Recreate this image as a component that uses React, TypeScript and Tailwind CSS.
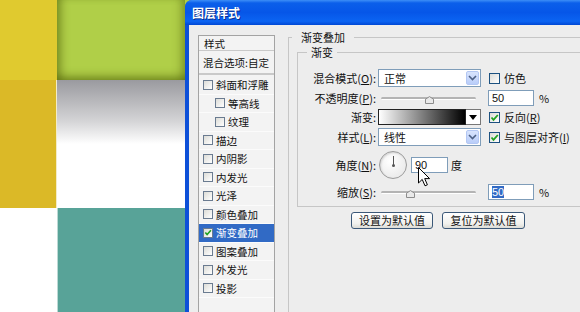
import React from "react";

const items = [
  { label: "斜面和浮雕" },
  { label: "等高线", indent: true },
  { label: "纹理", indent: true },
  { label: "描边" },
  { label: "内阴影" },
  { label: "内发光" },
  { label: "光泽" },
  { label: "颜色叠加" },
  { label: "渐变叠加", active: true },
  { label: "图案叠加" },
  { label: "外发光" },
  { label: "投影" },
];

function Box({ checked, small }: { checked?: boolean; small?: boolean }) {
  return (
    <span
      className={
        small
          ? "w-[10px] h-[10px] shrink-0 border border-[#6a7b90] bg-[linear-gradient(135deg,#dcdcd7,#ffffff)] flex items-center justify-center"
          : "w-[11px] h-[11px] shrink-0 border border-[#1c5180] bg-[linear-gradient(135deg,#dcdcd7,#ffffff)] flex items-center justify-center"
      }
    >
      {checked && (
        <svg width="9" height="9" viewBox="0 0 9 9">
          <path d="M1.5 4.5 L3.5 6.8 L7.8 2" fill="none" stroke="#21a121" strokeWidth="1.8" />
        </svg>
      )}
    </span>
  );
}

function Select({ value }: { value: string }) {
  return (
    <div className="ml-[2px] w-[103px] h-[18px] border border-[#7f9db9] bg-white flex items-center">
      <span className="pl-[5px] flex-1">{value}</span>
      <span className="w-[13px] h-[14px] mr-[1px] rounded-[2px] bg-[linear-gradient(#d8e4fd,#b9cdf9)] border border-[#b3c7f3] flex items-center justify-center">
        <svg width="9" height="6" viewBox="0 0 9 6">
          <path d="M1 1 L4.5 4.5 L8 1" fill="none" stroke="#4d6185" strokeWidth="1.6" />
        </svg>
      </span>
    </div>
  );
}

function Slider({ thumb }: { thumb: number }) {
  return (
    <div className="ml-[2px] w-[103px] h-[16px] relative flex items-center pl-[3px] pr-[5px]">
      <div className="w-full h-[3px] rounded-full bg-[#b4b4b4] border-b border-white" />
      <svg className="absolute top-[6px]" style={{ left: thumb }} width="9" height="8" viewBox="0 0 9 8">
        <path d="M0.5 7.5 V3.2 L4.5 0.6 L8.5 3.2 V7.5 Z" fill="#e9e9e9" stroke="#8c8c8c" />
      </svg>
    </div>
  );
}

function Label({ children }: { children: React.ReactNode }) {
  return <div className="w-[78px] text-right whitespace-nowrap">{children}</div>;
}

function NumBox({ children }: { children: React.ReactNode }) {
  return (
    <div className="w-[46px] h-[16px] border border-[#7f9db9] bg-white flex items-center pl-[3px] font-['Liberation_Sans',sans-serif]">
      {children}
    </div>
  );
}

export default function App() {
  return (
    <div className="w-[580px] h-[312px] overflow-hidden flex relative bg-[#b0cf48] text-[11px] leading-[13px] text-[#111] font-['Noto_Sans_CJK_SC',sans-serif]">
      {/* canvas behind the dialog */}
      <div className="grid grid-cols-[57px_128px] grid-rows-[80px_128px_104px] shrink-0">
        <div className="bg-[#e0ca2f]" />
        <div className="bg-[#b0cf48] shadow-[inset_9px_0_8px_-5px_rgba(80,95,10,0.55),inset_-9px_0_8px_-5px_rgba(80,95,10,0.45),inset_0_-9px_8px_-5px_rgba(80,95,10,0.55)]" />
        <div className="bg-[#dbb927] border-r border-[#f3ecc8]" />
        <div className="bg-[linear-gradient(#9a9a9f,#d4d4d6_32%,#ffffff_50%)]" />
        <div className="bg-white" />
        <div className="bg-[#58a398] border-l border-[#bcd9d4]" />
      </div>

      {/* dialog */}
      <div className="flex-1 min-w-0 flex flex-col rounded-tl-[7px] overflow-hidden bg-[#0d50d8]">
        <div className="h-[25px] shrink-0 flex items-center pl-[7px] bg-[linear-gradient(180deg,#3d8ef7_0%,#0b5fea_12%,#0656e8_50%,#0b64f2_85%,#0048d4_100%)]">
          <span className="text-white font-bold text-[12px] [text-shadow:1px_1px_0_#0a2f8f]">图层样式</span>
        </div>

        <div className="flex-1 flex ml-[4px] bg-[#ededed]">
          {/* style list */}
          <div className="ml-[9px] mt-[10px] w-[77px] shrink-0 border border-[#a3a3a3] bg-[#f3f3f3] flex flex-col text-[10.5px]">
            <div className="h-[15px] pl-[5px] flex items-center border-b border-[#c9c9c9]">样式</div>
            <div className="h-[24px] pl-[4px] flex items-center border-b-2 border-[#c9c9c9] whitespace-nowrap">混合选项:自定</div>
            <div className="mt-[1px] flex flex-col">
              {items.map((it) => (
                <div
                  key={it.label}
                  className={
                    "h-[18.5px] flex items-center gap-[3px] border-b border-[#fbfbfb] whitespace-nowrap " +
                    (it.indent ? "pl-[16px] " : "pl-[4px] ") +
                    (it.active ? "bg-[#316ac5] text-white" : "")
                  }
                >
                  <Box checked={it.active} small />
                  <span>{it.label}</span>
                </div>
              ))}
            </div>
          </div>

          {/* right side */}
          <fieldset className="ml-[13px] mt-[6px] w-[330px] h-[320px] shrink-0 border border-[#c6c6c6] pl-[8px]">
            <legend className="ml-[-5px] px-[9px]">渐变叠加</legend>
            <fieldset className="mt-[2px] w-[300px] border border-[#c6c6c6] pt-[10px] pb-[6px]">
              <legend className="ml-[9px] px-[4px]">渐变</legend>

              <div className="h-[18px] flex items-center">
                <Label>混合模式(<u>O</u>):</Label>
                <Select value="正常" />
                <span className="ml-[8px] flex items-center gap-[4px]">
                  <Box />
                  <span>仿色</span>
                </span>
              </div>

              <div className="mt-[3px] h-[16px] flex items-center">
                <Label>不透明度(<u>P</u>):</Label>
                <Slider thumb={47} />
                <span className="ml-[7px]"><NumBox>50</NumBox></span>
                <span className="ml-[5px]">%</span>
              </div>

              <div className="mt-[2px] h-[18px] flex items-center">
                <Label>渐变:</Label>
                <div className="ml-[2px] w-[103px] h-[16px] flex">
                  <div className="flex-1 border border-[#222] bg-[linear-gradient(90deg,#ffffff,#000000)]" />
                  <div className="w-[15px] border border-l-0 border-[#777] bg-white flex items-center justify-center">
                    <svg width="8" height="5" viewBox="0 0 8 5">
                      <path d="M0 0 H8 L4 5 Z" fill="#000" />
                    </svg>
                  </div>
                </div>
                <span className="ml-[8px] flex items-center gap-[4px]">
                  <Box checked />
                  <span>反向(<u>R</u>)</span>
                </span>
              </div>

              <div className="mt-[2px] h-[18px] flex items-center">
                <Label>样式(<u>L</u>):</Label>
                <Select value="线性" />
                <span className="ml-[8px] flex items-center gap-[4px] whitespace-nowrap">
                  <Box checked />
                  <span>与图层对齐(<u>I</u>)</span>
                </span>
              </div>

              <div className="mt-[5px] h-[28px] flex items-center">
                <Label>角度(<u>N</u>):</Label>
                <div className="ml-[3px] w-[28px] h-[28px] rounded-full border border-[#9b9b9b] bg-[radial-gradient(circle_at_40%_35%,#ffffff,#e4e4e4)] shadow-[inset_1px_1px_2px_rgba(0,0,0,0.15)] flex flex-col items-center pt-[4px]">
                  <div className="w-[1px] h-[9px] bg-[#555]" />
                  <div className="w-[3px] h-[3px] rounded-full bg-[#555] -mt-[1px]" />
                </div>
                <span className="ml-[4px]">
                  <div className="w-[37px] h-[16px] border border-[#7f9db9] bg-white flex items-center pl-[3px] font-['Liberation_Sans',sans-serif]">90</div>
                </span>
                <span className="ml-[3px]">度</span>
              </div>

              <div className="mt-[5px] h-[16px] flex items-center">
                <Label>缩放(<u>S</u>):</Label>
                <Slider thumb={28} />
                <span className="ml-[7px]">
                  <NumBox>
                    <span className="bg-[#316ac5] text-white leading-[12px]">50</span>
                  </NumBox>
                </span>
                <span className="ml-[5px]">%</span>
              </div>
            </fieldset>

            <div className="mt-[5px] pl-[54px] flex gap-[9px]">
              <button className="w-[82px] h-[17px] rounded-[3px] border border-[#3b5878] bg-[linear-gradient(#ffffff,#f1f1ee_70%,#dcdcd6)] text-[11px] leading-[13px]">设置为默认值</button>
              <button className="w-[83px] h-[17px] rounded-[3px] border border-[#3b5878] bg-[linear-gradient(#ffffff,#f1f1ee_70%,#dcdcd6)] text-[11px] leading-[13px]">复位为默认值</button>
            </div>
          </fieldset>
        </div>
      </div>

      {/* mouse pointer */}
      <svg className="absolute left-[418px] top-[167px]" width="13" height="20" viewBox="0 0 13 20">
        <path d="M0.5 0.5 V16 L4.2 12.4 L7 18.8 L9.4 17.8 L6.7 11.6 H11.6 Z" fill="#fff" stroke="#000" strokeWidth="1" strokeLinejoin="round" />
      </svg>
    </div>
  );
}
